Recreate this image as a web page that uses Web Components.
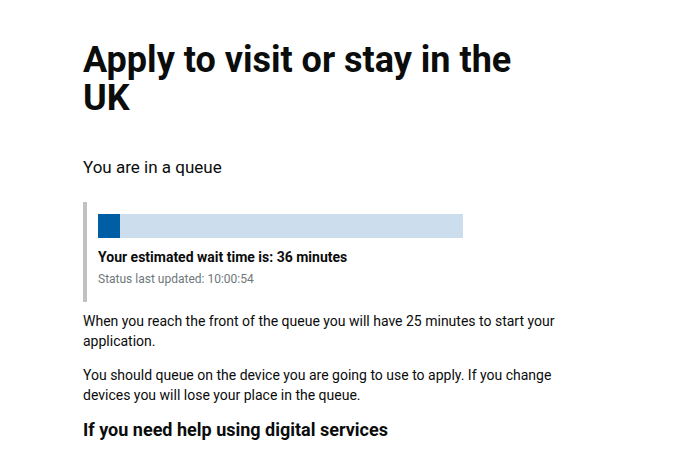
<!DOCTYPE html>
<html lang="en">
<head>
<meta charset="utf-8">
<meta name="viewport" content="width=device-width, initial-scale=1">
<title>Apply to visit or stay in the UK</title>
<style>
    body {
        margin: 0;
        background: #fff;
        color: #0b0c0c;
        font-family: Roboto, "Liberation Sans", sans-serif;
    }
</style>
</head>
<body>
<queue-page>
    <span slot="title">Apply to visit or stay in the UK</span>
    <span slot="lead">You are in a queue</span>
    <queue-status progress="6" minutes="36" updated="10:00:54"></queue-status>
    <help-text>
        <p>When you reach the front of the queue you will have 25 minutes to start your application.</p>
        <p>You should queue on the device you are going to use to apply. If you change devices you will lose your place in the queue.</p>
        <span slot="heading">If you need help using digital services</span>
    </help-text>
</queue-page>

<script>
class QueuePage extends HTMLElement{
    constructor(){
        super();
        this.shadowDOM = this.attachShadow({mode:"open"});
        this.render();
    }

    render(){
        this.shadowDOM.innerHTML = `<style>
    * {
        margin: 0;
        padding: 0;
    }

    :host {
        display: block;
        padding: 41px 83px 16px;
    }

    main {
        max-width: 480px;
    }

    h1 {
        font-size: 36px;
        line-height: 38px;
        font-weight: 700;
    }

    .lead {
        margin: 38px 0 23px;
        font-size: 17px;
        line-height: 24px;
    }

    @media screen and (max-width:480px){
        :host {
            padding: 24px 16px;
        }
    }
</style>

<main>
    <h1><slot name="title"></slot></h1>
    <p class="lead"><slot name="lead"></slot></p>
    <slot></slot>
</main>`;
    }
}

class QueueStatus extends HTMLElement{
    constructor(){
        super();
        this.shadowDOM = this.attachShadow({mode:"open"});
    }

    connectedCallback(){
        this.render();
    }

    render(){
        this.shadowDOM.innerHTML = `<style>
    * {
        margin: 0;
        padding: 0;
    }

    :host {
        display: block;
        padding: 12px 0 13px 11px;
        border-left: 4px solid #bfc1c3;
    }

    progress {
        display: block;
        width: 100%;
        max-width: 365px;
        height: 24px;
        margin-bottom: 9px;
        appearance: none;
        border: none;
        background: #ccdeed;
    }

    progress::-webkit-progress-bar {
        background: #ccdeed;
    }

    progress::-webkit-progress-value {
        background: #005ea5;
    }

    progress::-moz-progress-bar {
        background: #005ea5;
    }

    .wait {
        margin-bottom: 2px;
        font-size: 14px;
        line-height: 20px;
        font-weight: 700;
    }

    .updated {
        font-size: 12px;
        line-height: 20px;
        color: #6f777b;
    }
</style>

<progress max="100" value="${this.getAttribute('progress')}" aria-labelledby="wait"></progress>
<p class="wait" id="wait">Your estimated wait time is: ${this.getAttribute('minutes')} minutes</p>
<p class="updated">Status last updated: ${this.getAttribute('updated')}</p>`;
    }
}

class HelpText extends HTMLElement{
    constructor(){
        super();
        this.shadowDOM = this.attachShadow({mode:"open"});
        this.render();
    }

    render(){
        this.shadowDOM.innerHTML = `<style>
    :host {
        display: flex;
        flex-direction: column;
        gap: 14px;
        margin-top: 9px;
        font-size: 14px;
        line-height: 20px;
    }

    ::slotted(p) {
        margin: 0;
    }

    h2 {
        margin: 0;
        font-size: 18px;
        line-height: 22px;
        font-weight: 700;
    }
</style>

<slot></slot>
<h2><slot name="heading"></slot></h2>`;
    }
}

customElements.define('queue-page',QueuePage);
customElements.define('queue-status',QueueStatus);
customElements.define('help-text',HelpText);
</script>
</body>
</html>
